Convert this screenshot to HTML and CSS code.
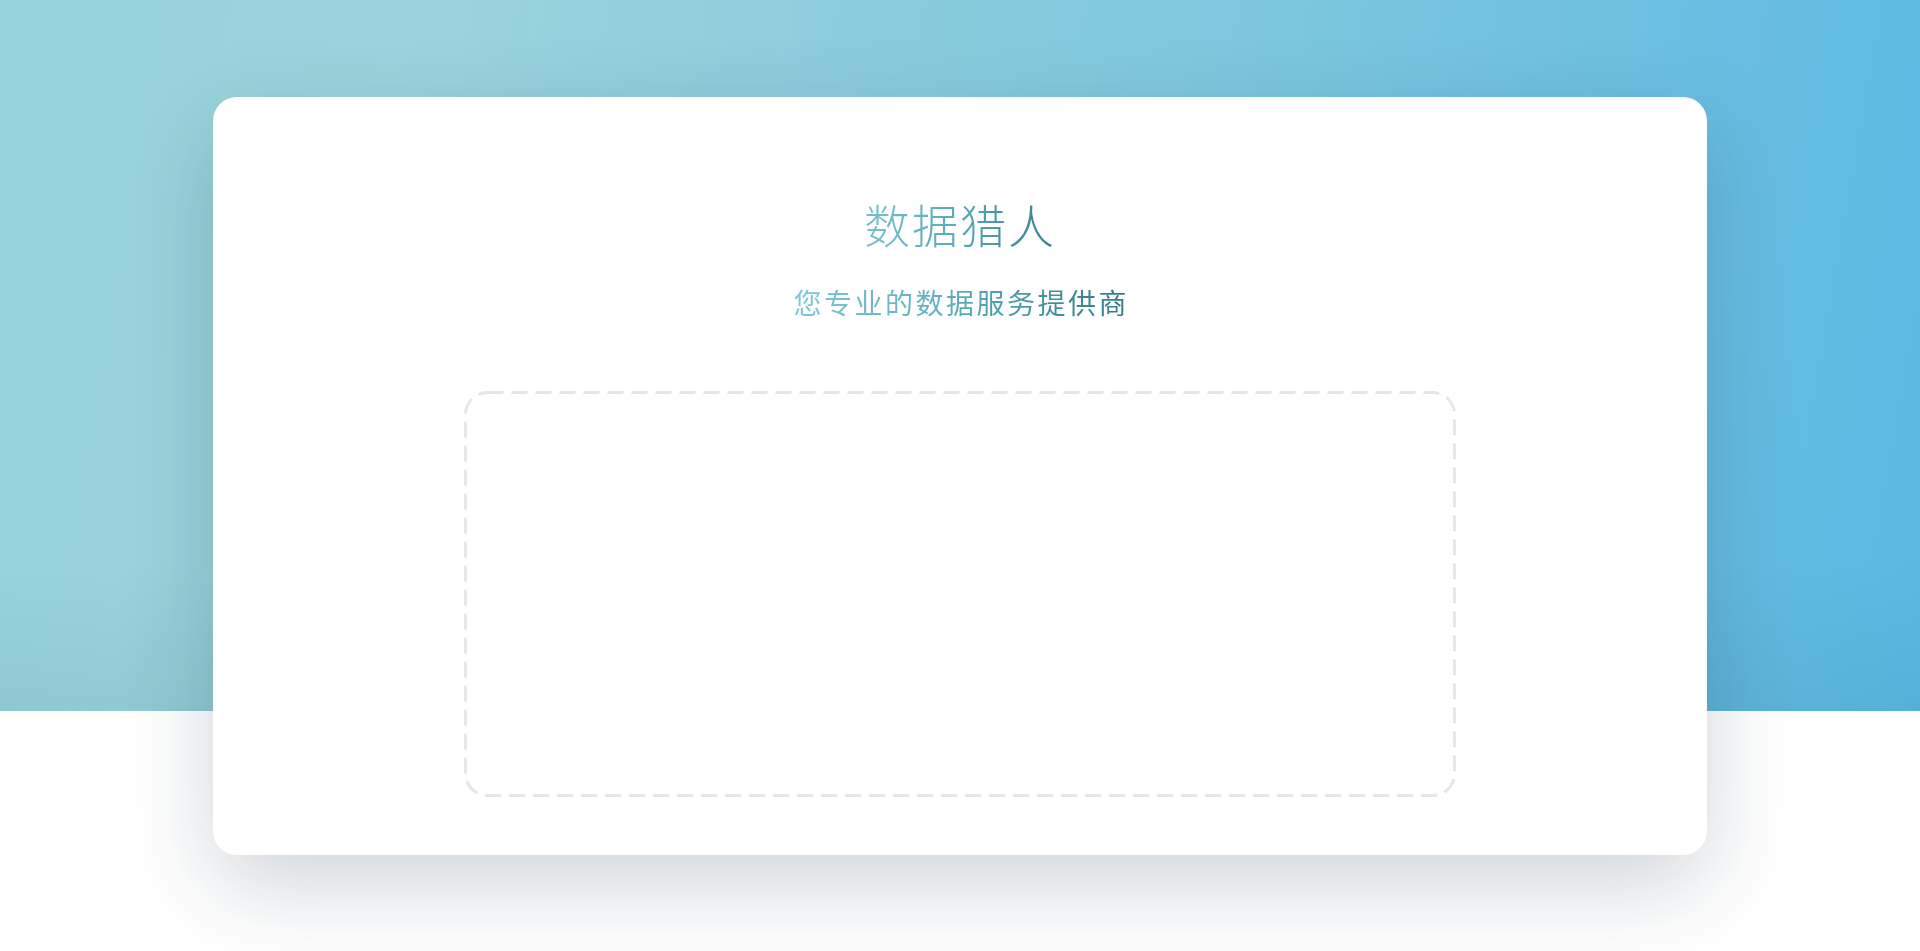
FILE: index.html
```html
<!DOCTYPE html>
<html lang="zh-CN">
<head>
<meta charset="utf-8">
<title>数据猎人</title>
<link rel="stylesheet" href="styles.css">
</head>
<body>
<div class="page">
  <main class="card">
    <h1 class="title">数据猎人</h1>
    <p class="subtitle">您专业的数据服务提供商</p>
    <div class="dropzone">
      <svg class="dash" viewBox="0 0 992 406" preserveAspectRatio="none" aria-hidden="true">
        <rect x="1.5" y="1.5" width="989" height="403" rx="22" ry="22" fill="none" stroke="#e6e6e6" stroke-width="3" stroke-dasharray="16 8"/>
      </svg>
    </div>
  </main>
</div>
</body>
</html>
```
FILE: styles.css
```css
html, body {
  margin: 0;
  padding: 0;
  height: 100%;
}
body {
  background: #ffffff;
  font-family: "Noto Sans CJK SC", "Noto Sans", sans-serif;
  overflow: hidden;
}
.page {
  min-height: 951px;
  background:
    linear-gradient(180deg, rgba(0, 0, 0, 0) 0, rgba(0, 0, 0, 0) 560px, rgba(20, 60, 80, 0.07) 711px) 0 0 / 100% 711px no-repeat,
    linear-gradient(100deg, #96d3db 0%, #9bd4dc 20%, #7fc7de 60%, #5ab9e2 100%) 0 0 / 100% 711px no-repeat,
    #ffffff;
  padding-top: 97px;
  box-sizing: border-box;
}
.card {
  width: 1494px;
  height: 758px;
  margin: 0 auto;
  background: #ffffff;
  border-radius: 24px;
  box-shadow: 0 30px 90px rgba(20, 40, 60, 0.2);
  box-sizing: border-box;
  padding-top: 96px;
  display: flex;
  flex-direction: column;
  align-items: center;
}
.title {
  margin: 0;
  font-size: 46px;
  line-height: 60px;
  font-weight: 300;
  letter-spacing: 2px;
  background: linear-gradient(90deg, #76c1cd 0%, #5aa9b6 50%, #357f89 100%);
  -webkit-background-clip: text;
  background-clip: text;
  color: transparent;
}
.subtitle {
  margin: 29px 0 0;
  font-size: 28px;
  line-height: 40px;
  font-weight: 400;
  letter-spacing: 2.5px;
  padding-left: 2.5px;
  background: linear-gradient(90deg, #80c9d5 0%, #5eafbc 45%, #2f7a84 100%);
  -webkit-background-clip: text;
  background-clip: text;
  color: transparent;
}
.dropzone {
  margin-top: 69px;
  width: 992px;
  height: 406px;
  position: relative;
}
.dash {
  display: block;
  width: 100%;
  height: 100%;
}
```
